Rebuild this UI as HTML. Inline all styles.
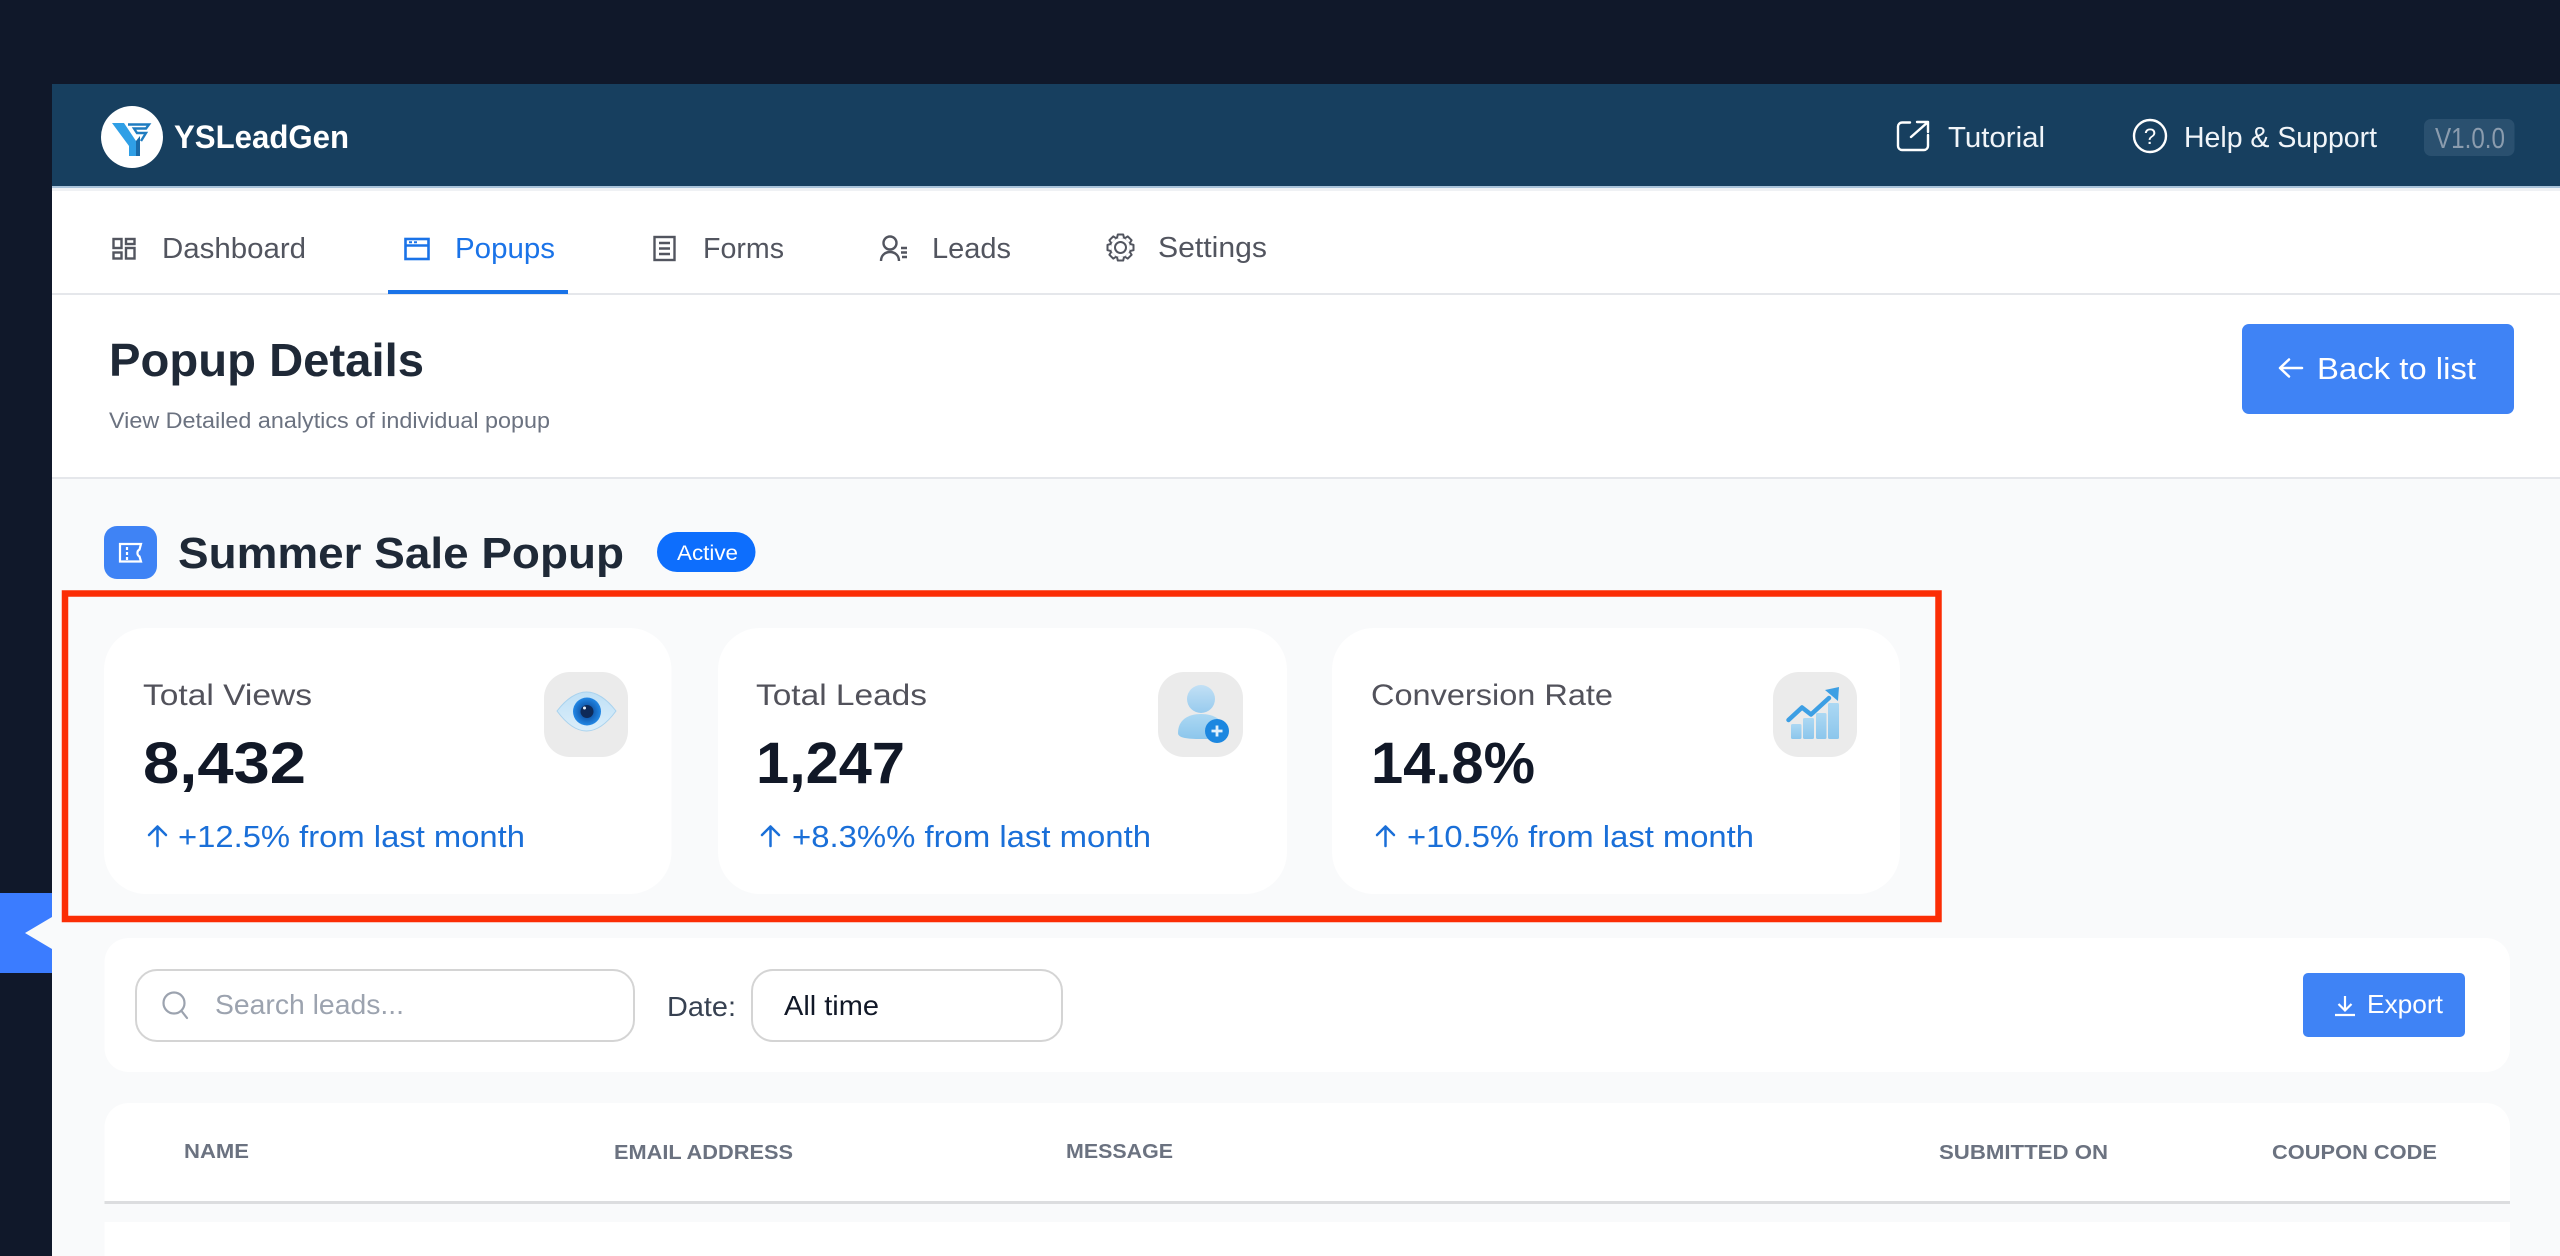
<!DOCTYPE html>
<html lang="en">
<head>
<meta charset="utf-8">
<title>Popup Details</title>
<style>
html,body{margin:0;padding:0;width:2560px;height:1256px;overflow:hidden;background:#10182a}
svg{display:block}
text{font-family:"Liberation Sans",sans-serif}
.b{font-weight:700}
.nav{font-size:29px;fill:#52555f}
.th{font-size:20px;font-weight:700;fill:#6b7280}
.lbl{font-size:30px;fill:#52525b}
.val{font-size:58px;font-weight:700;fill:#111827}
.sub{font-size:31px;fill:#1a6fd8}
</style>
</head>
<body>
<svg xmlns="http://www.w3.org/2000/svg" width="2560" height="1256" viewBox="0 0 2560 1256">
<defs>
<linearGradient id="g1" x1="0" y1="0" x2="0" y2="1"><stop offset="0" stop-color="#c2e0f5"/><stop offset="1" stop-color="#98cbee"/></linearGradient>
<linearGradient id="g2" x1="0" y1="0" x2="0" y2="1"><stop offset="0" stop-color="#acd8f3"/><stop offset="1" stop-color="#8cc6ec"/></linearGradient>
<linearGradient id="g4" x1="0" y1="0" x2="0" y2="1"><stop offset="0" stop-color="#bfe0f6"/><stop offset="1" stop-color="#dbeefa"/></linearGradient>
<radialGradient id="g3"><stop offset="0.35" stop-color="#0f55a8"/><stop offset="1" stop-color="#2288e6"/></radialGradient>
</defs>

<!-- backdrop -->
<rect width="2560" height="1256" fill="#10182a"/>

<!-- app surface -->
<rect x="52" y="187" width="2508" height="1069" fill="#f9fafb"/>

<!-- top bar -->
<rect x="52" y="84" width="2508" height="103" fill="#173f5f"/>
<rect x="52" y="186" width="2508" height="2" fill="#a9c3da"/>
<rect x="52" y="188" width="2508" height="3" fill="#eff1f4"/>
<circle cx="132" cy="137" r="31" fill="#fff"/>
<polygon points="112,123 124,123 136,141 136,156 129,156 129,146" fill="#2f9fe6"/>
<polygon points="136,141 140,136 140,156 136,156" fill="#1a6aa8"/>
<path d="M128 124.500H149L146 128.500H134L137 133H146L141 141" fill="none" stroke="#1f7cc0" stroke-width="2.400"/>
<text x="174" y="148" font-size="32" class="b" fill="#fff" textLength="175" lengthAdjust="spacingAndGlyphs">YSLeadGen</text>

<g fill="none" stroke="#fff" stroke-width="2.400" stroke-linecap="round" stroke-linejoin="round">
<path d="M1910 122.500H1902a4 4 0 0 0-4 4V146a4 4 0 0 0 4 4h22a4 4 0 0 0 4-4V135"/>
<path d="M1911 137L1928 122M1917 122H1928V132"/>
<circle cx="2150" cy="136" r="16"/>
</g>
<text x="2150" y="144" font-size="22" fill="#fff" text-anchor="middle">?</text>
<text x="1948" y="147" font-size="29" fill="#f1f5f9" textLength="97" lengthAdjust="spacingAndGlyphs">Tutorial</text>
<text x="2184" y="147" font-size="29" fill="#f1f5f9" textLength="193" lengthAdjust="spacingAndGlyphs">Help &amp; Support</text>
<rect x="2424" y="119" width="90.500" height="37" rx="7" fill="#2a506f"/>
<text x="2435" y="148" font-size="29" fill="#8b9cae" textLength="70" lengthAdjust="spacingAndGlyphs">V1.0.0</text>

<!-- tabs -->
<rect x="52" y="191" width="2508" height="102" fill="#fff"/>
<rect x="52" y="293" width="2508" height="2" fill="#e5e7eb"/>
<rect x="388" y="290" width="180" height="4" fill="#1a73e8"/>

<g fill="none" stroke="#52555f" stroke-width="2.400">
<rect x="113.500" y="239" width="8" height="9"/>
<rect x="126" y="239" width="8.500" height="5"/>
<rect x="113.500" y="252.500" width="8" height="6"/>
<rect x="126" y="248" width="8.500" height="10.500"/>
</g>
<text x="162" y="258" class="nav" textLength="144" lengthAdjust="spacingAndGlyphs">Dashboard</text>

<g fill="none" stroke="#1a73e8" stroke-width="2.600">
<rect x="405.500" y="239" width="23" height="20"/>
<path d="M405.500 245.500H428.500"/>
<path d="M409 242.200H412M414 242.200H417" stroke-width="2"/>
</g>
<text x="455" y="258" font-size="29" fill="#1a73e8" textLength="100" lengthAdjust="spacingAndGlyphs">Popups</text>

<g fill="none" stroke="#52555f" stroke-width="2.400">
<rect x="654.500" y="237" width="20" height="23"/>
<path d="M659 243H670M659 248.500H670M659 254H670"/>
</g>
<text x="703" y="258" class="nav" textLength="81" lengthAdjust="spacingAndGlyphs">Forms</text>

<g fill="none" stroke="#52555f" stroke-width="2.400">
<circle cx="890" cy="243" r="6.500"/>
<path d="M881 261c0-12 18-12 18 0"/>
<path d="M901 248H907M901 252.500H907M902 257H907"/>
</g>
<text x="932" y="258" class="nav" textLength="79" lengthAdjust="spacingAndGlyphs">Leads</text>

<g transform="translate(1120.500 247.500)" fill="#fff" stroke="#52555f" stroke-width="2" stroke-linejoin="round">
<circle r="10.500" fill="none"/>
<circle r="5.500" fill="none"/>
<path d="M-3.500-9.500L-2.700-13H2.700L3.500-9.500"/>
<path transform="rotate(45)" d="M-3.500-9.500L-2.700-13H2.700L3.500-9.500"/>
<path transform="rotate(90)" d="M-3.500-9.500L-2.700-13H2.700L3.500-9.500"/>
<path transform="rotate(135)" d="M-3.500-9.500L-2.700-13H2.700L3.500-9.500"/>
<path transform="rotate(180)" d="M-3.500-9.500L-2.700-13H2.700L3.500-9.500"/>
<path transform="rotate(225)" d="M-3.500-9.500L-2.700-13H2.700L3.500-9.500"/>
<path transform="rotate(270)" d="M-3.500-9.500L-2.700-13H2.700L3.500-9.500"/>
<path transform="rotate(315)" d="M-3.500-9.500L-2.700-13H2.700L3.500-9.500"/>
</g>
<text x="1158" y="257" class="nav" textLength="109" lengthAdjust="spacingAndGlyphs">Settings</text>

<!-- page header -->
<rect x="52" y="295" width="2508" height="182" fill="#fff"/>
<rect x="52" y="477" width="2508" height="2" fill="#e5e7eb"/>
<text x="109" y="376" font-size="46" class="b" fill="#1f2937" textLength="315" lengthAdjust="spacingAndGlyphs">Popup Details</text>
<text x="109" y="428" font-size="22" fill="#6b7280" textLength="441" lengthAdjust="spacingAndGlyphs">View Detailed analytics of individual popup</text>
<rect x="2242" y="324" width="272" height="90" rx="7" fill="#3f83f5"/>
<path d="M2289 359.500L2280 368L2289 376.500M2280 368H2302" fill="none" stroke="#fff" stroke-width="2.500" stroke-linecap="round" stroke-linejoin="round"/>
<text x="2317" y="379" font-size="31" fill="#fff" textLength="159" lengthAdjust="spacingAndGlyphs">Back to list</text>

<!-- popup title -->
<rect x="104" y="526" width="53" height="53" rx="13" fill="#3f83f5"/>
<path d="M120 544H141L139.500 549.500A4 4 0 0 0 139.500 556.500L141 561.500H120Z" fill="none" stroke="#fff" stroke-width="2.200"/>
<path d="M127 547V550M127 552V555M127 557V560" stroke="#fff" stroke-width="2.200"/>
<text x="178" y="568" font-size="44" class="b" fill="#1f2937" textLength="446" lengthAdjust="spacingAndGlyphs">Summer Sale Popup</text>
<rect x="657" y="532" width="98.500" height="40" rx="20" fill="#0d6efd"/>
<text x="677" y="560" font-size="21" fill="#fff" textLength="61" lengthAdjust="spacingAndGlyphs">Active</text>

<!-- stat cards -->
<rect x="104" y="628" width="567.500" height="266" rx="42" fill="#fff"/>
<rect x="718" y="628" width="569" height="266" rx="42" fill="#fff"/>
<rect x="1332" y="628" width="568" height="266" rx="42" fill="#fff"/>

<text x="143" y="705" class="lbl" textLength="169" lengthAdjust="spacingAndGlyphs">Total Views</text>
<text x="143" y="783" class="val" textLength="163" lengthAdjust="spacingAndGlyphs">8,432</text>
<path d="M149 835L157.500 826.500L166 835M157.500 826.500V846" fill="none" stroke="#1a6fd8" stroke-width="2.500" stroke-linecap="round" stroke-linejoin="round"/>
<text x="178" y="847" class="sub" textLength="347" lengthAdjust="spacingAndGlyphs">+12.5% from last month</text>
<rect x="544" y="672" width="84" height="85" rx="26" fill="#ebebeb"/>
<path d="M557 711Q586.500 673 616 711Q586.500 751 557 711Z" fill="url(#g4)" stroke="#a8d2ee"/>
<circle cx="587" cy="711.500" r="14" fill="url(#g3)"/>
<circle cx="587" cy="711.500" r="6.500" fill="#0e2a58"/>
<circle cx="584.500" cy="708" r="1.500" fill="#e8f2fb"/>

<text x="756" y="705" class="lbl" textLength="171" lengthAdjust="spacingAndGlyphs">Total Leads</text>
<text x="756" y="783" class="val" textLength="149" lengthAdjust="spacingAndGlyphs">1,247</text>
<path d="M762 835L770.500 826.500L779 835M770.500 826.500V846" fill="none" stroke="#1a6fd8" stroke-width="2.500" stroke-linecap="round" stroke-linejoin="round"/>
<text x="792" y="847" class="sub" textLength="359" lengthAdjust="spacingAndGlyphs">+8.3%% from last month</text>
<rect x="1158" y="672" width="85" height="85" rx="26" fill="#ebebeb"/>
<circle cx="1201" cy="699" r="14" fill="url(#g1)"/>
<path d="M1178 733C1178 720 1188 714 1201 714C1214 714 1225 720 1225 733C1225 738 1216 739 1201 739C1187 739 1178 738 1178 733Z" fill="url(#g2)"/>
<circle cx="1217" cy="731" r="12" fill="#1c87e0"/>
<path d="M1217 725.500V736.500M1211.500 731H1222.500" stroke="#dff0fc" stroke-width="2.800"/>

<text x="1371" y="705" class="lbl" textLength="242" lengthAdjust="spacingAndGlyphs">Conversion Rate</text>
<text x="1371" y="783" class="val" textLength="164" lengthAdjust="spacingAndGlyphs">14.8%</text>
<path d="M1377 835L1385.500 826.500L1394 835M1385.500 826.500V846" fill="none" stroke="#1a6fd8" stroke-width="2.500" stroke-linecap="round" stroke-linejoin="round"/>
<text x="1407" y="847" class="sub" textLength="347" lengthAdjust="spacingAndGlyphs">+10.5% from last month</text>
<rect x="1773" y="672" width="84" height="85" rx="26" fill="#ebebeb"/>
<rect x="1791" y="724" width="10.500" height="15" rx="1.500" fill="url(#g2)"/>
<rect x="1803" y="718" width="11" height="21" rx="1.500" fill="url(#g2)"/>
<rect x="1816" y="713" width="10.500" height="26" rx="1.500" fill="url(#g2)"/>
<rect x="1828" y="703" width="11" height="36" rx="1.500" fill="url(#g2)"/>
<path d="M1788.500 720L1802 707.500L1811 714.500L1829 698" fill="none" stroke="#3d9fe4" stroke-width="4.500" stroke-linecap="round" stroke-linejoin="round"/>
<polygon points="1839,687 1838,701 1825,690" fill="#3d9fe4"/>

<!-- highlight frame -->
<rect x="65" y="593.500" width="1873.500" height="325.500" fill="none" stroke="#fb2d05" stroke-width="6.500"/>

<!-- side tab -->
<rect x="0" y="893" width="52" height="80" fill="#3b7cff"/>
<polygon points="25,933 52,917 52,949" fill="#f9fafb"/>

<!-- filter bar -->
<rect x="104.500" y="938" width="2405.500" height="134" rx="24" fill="#fff"/>
<rect x="136" y="970" width="498" height="71" rx="21" fill="#fff" stroke="#d4d4d4" stroke-width="2"/>
<circle cx="174" cy="1003" r="10.500" fill="none" stroke="#9ca3af" stroke-width="2.200"/>
<path d="M181.500 1011L187 1018" stroke="#9ca3af" stroke-width="2.200" stroke-linecap="round"/>
<text x="215" y="1014" font-size="28" fill="#9ca3af" textLength="189" lengthAdjust="spacingAndGlyphs">Search leads...</text>
<text x="667" y="1016" font-size="28" fill="#374151" textLength="69" lengthAdjust="spacingAndGlyphs">Date:</text>
<rect x="752" y="970" width="310" height="71" rx="21" fill="#fff" stroke="#d4d4d4" stroke-width="2"/>
<text x="784" y="1015" font-size="28" fill="#111827" textLength="95" lengthAdjust="spacingAndGlyphs">All time</text>
<rect x="2303" y="973" width="162" height="64" rx="5" fill="#3f83f5"/>
<path d="M2345 996V1010M2338.500 1004L2345 1010.500L2351.500 1004M2335 1015H2355" fill="none" stroke="#fff" stroke-width="2.200"/>
<text x="2367" y="1013" font-size="26" fill="#fff" textLength="76" lengthAdjust="spacingAndGlyphs">Export</text>

<!-- table -->
<path d="M104.500 1202V1127a24 24 0 0 1 24-24H2486a24 24 0 0 1 24 24V1202Z" fill="#fff"/>
<rect x="104.500" y="1201" width="2405.500" height="3" fill="#dcdddf"/>
<rect x="104.500" y="1222" width="2405.500" height="34" fill="#fff"/>
<text x="184" y="1158" class="th" textLength="65" lengthAdjust="spacingAndGlyphs">NAME</text>
<text x="614" y="1159" class="th" textLength="179" lengthAdjust="spacingAndGlyphs">EMAIL ADDRESS</text>
<text x="1066" y="1158" class="th" textLength="107" lengthAdjust="spacingAndGlyphs">MESSAGE</text>
<text x="1939" y="1159" class="th" textLength="169" lengthAdjust="spacingAndGlyphs">SUBMITTED ON</text>
<text x="2272" y="1159" class="th" textLength="165" lengthAdjust="spacingAndGlyphs">COUPON CODE</text>
</svg>
</body>
</html>
